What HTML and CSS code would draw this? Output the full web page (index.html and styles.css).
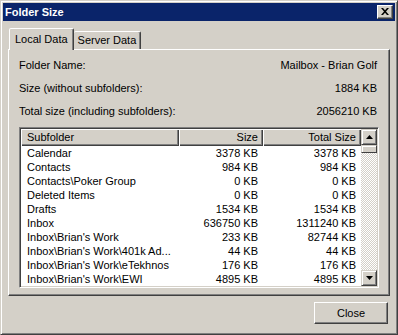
FILE: index.html
```html
<!DOCTYPE html>
<html lang="en">
<head>
  <meta charset="UTF-8">
  <title>Folder Size</title>
  <link rel="stylesheet" href="styles.css">
</head>
<body>

  <div class="window">
    <div class="titlebar">
      <div class="title">Folder Size</div>
      <button class="close-x" title="Close">
        <svg width="8" height="7" viewBox="0 0 8 7">
          <path d="M0 0h2l2 2.2L6 0h2L5 3.5 8 7H6L4 4.8 2 7H0l3-3.5z" fill="#000"/>
        </svg>
      </button>
    </div>

    <div class="content">
      <div class="tabs">
        <div class="tab active">Local Data</div>
        <div class="tab">Server Data</div>
      </div>

      <div class="panel">
        <div class="info-row">
          <span>Folder Name:</span>
          <span>Mailbox - Brian Golf</span>
        </div>
        <div class="info-row">
          <span>Size (without subfolders):</span>
          <span>1884 KB</span>
        </div>
        <div class="info-row">
          <span>Total size (including subfolders):</span>
          <span>2056210 KB</span>
        </div>

        <div class="list">
          <div class="list-main">
            <div class="list-head">
              <div class="col-head">Subfolder</div>
              <div class="col-head num">Size</div>
              <div class="col-head num">Total Size</div>
            </div>
            <div class="list-row"><span>Calendar</span><span class="num">3378 KB</span><span class="num">3378 KB</span></div>
            <div class="list-row"><span>Contacts</span><span class="num">984 KB</span><span class="num">984 KB</span></div>
            <div class="list-row"><span>Contacts\Poker Group</span><span class="num">0 KB</span><span class="num">0 KB</span></div>
            <div class="list-row"><span>Deleted Items</span><span class="num">0 KB</span><span class="num">0 KB</span></div>
            <div class="list-row"><span>Drafts</span><span class="num">1534 KB</span><span class="num">1534 KB</span></div>
            <div class="list-row"><span>Inbox</span><span class="num">636750 KB</span><span class="num">1311240 KB</span></div>
            <div class="list-row"><span>Inbox\Brian's Work</span><span class="num">233 KB</span><span class="num">82744 KB</span></div>
            <div class="list-row"><span>Inbox\Brian's Work\401k Ad...</span><span class="num">44 KB</span><span class="num">44 KB</span></div>
            <div class="list-row"><span>Inbox\Brian's Work\eTekhnos</span><span class="num">176 KB</span><span class="num">176 KB</span></div>
            <div class="list-row"><span>Inbox\Brian's Work\EWI</span><span class="num">4895 KB</span><span class="num">4895 KB</span></div>
          </div>

          <div class="scrollbar">
            <div class="sb-btn">
              <svg width="7" height="4" viewBox="0 0 7 4"><path d="M3.5 0L7 4H0z" fill="#000"/></svg>
            </div>
            <div class="sb-thumb"></div>
            <div class="sb-track"></div>
            <div class="sb-btn">
              <svg width="7" height="4" viewBox="0 0 7 4"><path d="M0 0h7L3.5 4z" fill="#000"/></svg>
            </div>
          </div>
        </div>
      </div>

      <div class="btn-bar">
        <button class="btn">Close</button>
      </div>
    </div>
  </div>

</body>
</html>
```

FILE: styles.css
```css
html, body {
  margin: 0;
  padding: 0;
  background-color: #d4d0c8;
}

body {
  font-family: "Liberation Sans", Arial, sans-serif;
  font-size: 11px;
  color: #000;
}

.window {
  width: 398px;
  height: 335px;
  box-sizing: border-box;
  padding: 2px;
  border: 1px solid;
  border-color: #d4d0c8 #404040 #404040 #d4d0c8;
  box-shadow: inset 1px 1px #fff, inset -1px -1px #808080;
  background-color: #d4d0c8;
}

.titlebar {
  height: 18px;
  background-color: #0a246a;
  display: flex;
  align-items: center;
  justify-content: space-between;
  padding: 0 2px 0 2px;
}

.title {
  color: #fff;
  font-weight: bold;
  font-size: 11px;
  padding-left: 0;
}

.close-x {
  width: 16px;
  height: 14px;
  padding: 0;
  margin: 0;
  border: 1px solid;
  border-color: #fff #404040 #404040 #fff;
  box-shadow: inset -1px -1px #808080;
  background-color: #d4d0c8;
  display: flex;
  align-items: center;
  justify-content: center;
}

.close-x svg {
  display: block;
  margin: 0 1px 1px 0;
}

.content {
  padding: 7px 5px 0 5px;
}

.tabs {
  display: flex;
  align-items: flex-end;
  height: 21px;
  padding-left: 1px;
}

.tab {
  height: 18px;
  box-sizing: border-box;
  padding: 0 4px;
  line-height: 17px;
  border: 1px solid;
  border-bottom: none;
  border-color: #fff #404040 transparent #fff;
  box-shadow: inset -1px 0 #808080;
  border-radius: 2px 2px 0 0;
}

.tab.active {
  height: 22px;
  margin-bottom: -1px;
  padding: 0 5px;
  line-height: 20px;
  position: relative;
  z-index: 1;
  background-color: #d4d0c8;
}

.tab.active + .tab {
  border-left: none;
}

.panel {
  height: 247px;
  box-sizing: border-box;
  padding: 4px 10px 0 10px;
  border: 1px solid;
  border-color: #fff #404040 #404040 #fff;
  box-shadow: inset -1px -1px #808080;
}

.info-row {
  display: flex;
  justify-content: space-between;
  height: 23px;
  line-height: 23px;
  padding-right: 2px;
}

.list {
  margin-top: 4px;
  height: 161px;
  box-sizing: border-box;
  padding: 1px;
  border: 1px solid;
  border-color: #808080 #fff #fff #808080;
  box-shadow: inset 1px 1px #404040, inset -1px -1px #d4d0c8;
  background-color: #fff;
  display: flex;
}

.list-main {
  flex: 1;
  overflow: hidden;
}

.list-head,
.list-row {
  display: grid;
  grid-template-columns: 158px 84px 98px;
}

.col-head {
  height: 17px;
  line-height: 16px;
  box-sizing: border-box;
  padding: 0 6px;
  background-color: #d4d0c8;
  box-shadow: inset 1px 1px #fff, inset -1px -1px #404040, inset -2px -2px #808080;
}

.col-head.num {
  text-align: right;
  padding-right: 5px;
}

.list-row {
  height: 14px;
  line-height: 14px;
  white-space: nowrap;
}

.list-row span {
  padding: 0 6px;
  overflow: hidden;
}

.list-row .num {
  text-align: right;
  padding-right: 5px;
}

.scrollbar {
  width: 16px;
  display: flex;
  flex-direction: column;
}

.sb-btn {
  height: 16px;
  box-sizing: border-box;
  background-color: #d4d0c8;
  border: 1px solid;
  border-color: #d4d0c8 #404040 #404040 #d4d0c8;
  box-shadow: inset 1px 1px #fff, inset -1px -1px #808080;
  display: flex;
  align-items: center;
  justify-content: center;
}

.sb-thumb {
  height: 8px;
  box-sizing: border-box;
  background-color: #d4d0c8;
  border: 1px solid;
  border-color: #d4d0c8 #404040 #404040 #d4d0c8;
  box-shadow: inset 1px 1px #fff;
}

.sb-track {
  flex: 1;
  background: repeating-conic-gradient(#d4d0c8 0 25%, #fff 0 50%) 0 0 / 2px 2px;
}

.btn-bar {
  display: flex;
  justify-content: flex-end;
  padding: 6px 2px 0 0;
}

.btn {
  width: 74px;
  height: 22px;
  font-family: "Liberation Sans", Arial, sans-serif;
  font-size: 11px;
  color: #000;
  background-color: #d4d0c8;
  border: 1px solid;
  border-color: #fff #404040 #404040 #fff;
  box-shadow: inset -1px -1px #808080;
  padding: 0;
}
```
